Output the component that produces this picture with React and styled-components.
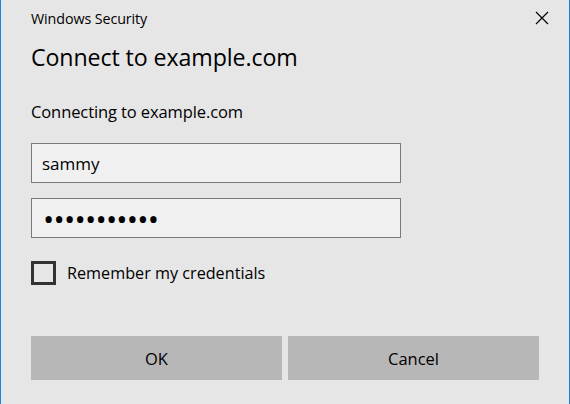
import React, { useState } from "react";
import styled, { createGlobalStyle } from "styled-components";

const Global = createGlobalStyle`
  html, body { margin: 0; padding: 0; }
  body { font-family: "Open Sans", "Noto Sans", sans-serif; color: #000; }
`;

const Window = styled.div`
  box-sizing: border-box;
  width: 570px;
  height: 404px;
  background: #e6e6e6;
  border-left: 1px solid #1883d7;
  border-right: 1px solid #1883d7;
  display: flex;
  flex-direction: column;
`;

const TitleBar = styled.div`
  height: 36px;
  display: flex;
  align-items: center;
  justify-content: space-between;
  padding: 0 20px 0 30px;
  font-size: 14.3px;
  letter-spacing: -0.1px;
`;

const Close = styled.button`
  border: none;
  background: none;
  padding: 0;
  width: 14px;
  height: 14px;
  display: flex;
  cursor: pointer;
`;

const Body = styled.div`
  padding: 0 30px;
  display: flex;
  flex-direction: column;
`;

const Heading = styled.h1`
  margin: 6px 0 0;
  font-size: 23.2px;
  font-weight: 400;
  line-height: 30px;
  letter-spacing: -0.1px;
`;

const Sub = styled.p`
  margin: 29px 0 0;
  font-size: 16.5px;
  line-height: 22px;
  letter-spacing: -0.1px;
`;

const Field = styled.input`
  box-sizing: border-box;
  width: 370px;
  height: 40px;
  margin-top: ${p => p.$top}px;
  border: 1px solid #7a7a7a;
  background: #f0f0f0;
  padding: 0 ${p => (p.type === "password" ? 11 : 10)}px;
  font-family: inherit;
  font-size: ${p => (p.type === "password" ? 30 : 17)}px;
  letter-spacing: ${p => (p.type === "password" ? -0.8 : 0)}px;
  color: #000;
  outline: none;
`;

const CheckRow = styled.label`
  display: flex;
  align-items: center;
  gap: 11px;
  margin-top: 23px;
  font-size: 16.2px;
  cursor: pointer;
`;

const Box = styled.span`
  box-sizing: border-box;
  width: 25px;
  height: 24px;
  border: 3px solid #333;
  background: #e6e6e6;
`;

const Buttons = styled.div`
  display: grid;
  grid-template-columns: 251px 251px;
  gap: 6px;
  margin-top: 51px;
`;

const Btn = styled.button`
  height: 44px;
  border: none;
  background: #b7b7b7;
  font-family: inherit;
  font-size: 16.5px;
  color: #000;
  cursor: pointer;
`;

export default function App() {
  const [user, setUser] = useState("sammy");
  const [pass, setPass] = useState("passwordxyz");
  const [remember, setRemember] = useState(false);

  return (
    <>
      <Global />
      <Window>
        <TitleBar>
          <span>Windows Security</span>
          <Close aria-label="Close">
            <svg width="14" height="14" viewBox="0 0 14 14">
              <path d="M1 1 L13 13 M13 1 L1 13" stroke="#000" strokeWidth="1.2" />
            </svg>
          </Close>
        </TitleBar>
        <Body>
          <Heading>Connect to example.com</Heading>
          <Sub>Connecting to example.com</Sub>
          <Field $top={20} value={user} onChange={e => setUser(e.target.value)} />
          <Field $top={15} type="password" value={pass} onChange={e => setPass(e.target.value)} />
          <CheckRow onClick={() => setRemember(!remember)}>
            <Box />
            Remember my credentials
          </CheckRow>
          <Buttons>
            <Btn>OK</Btn>
            <Btn>Cancel</Btn>
          </Buttons>
        </Body>
      </Window>
    </>
  );
}
